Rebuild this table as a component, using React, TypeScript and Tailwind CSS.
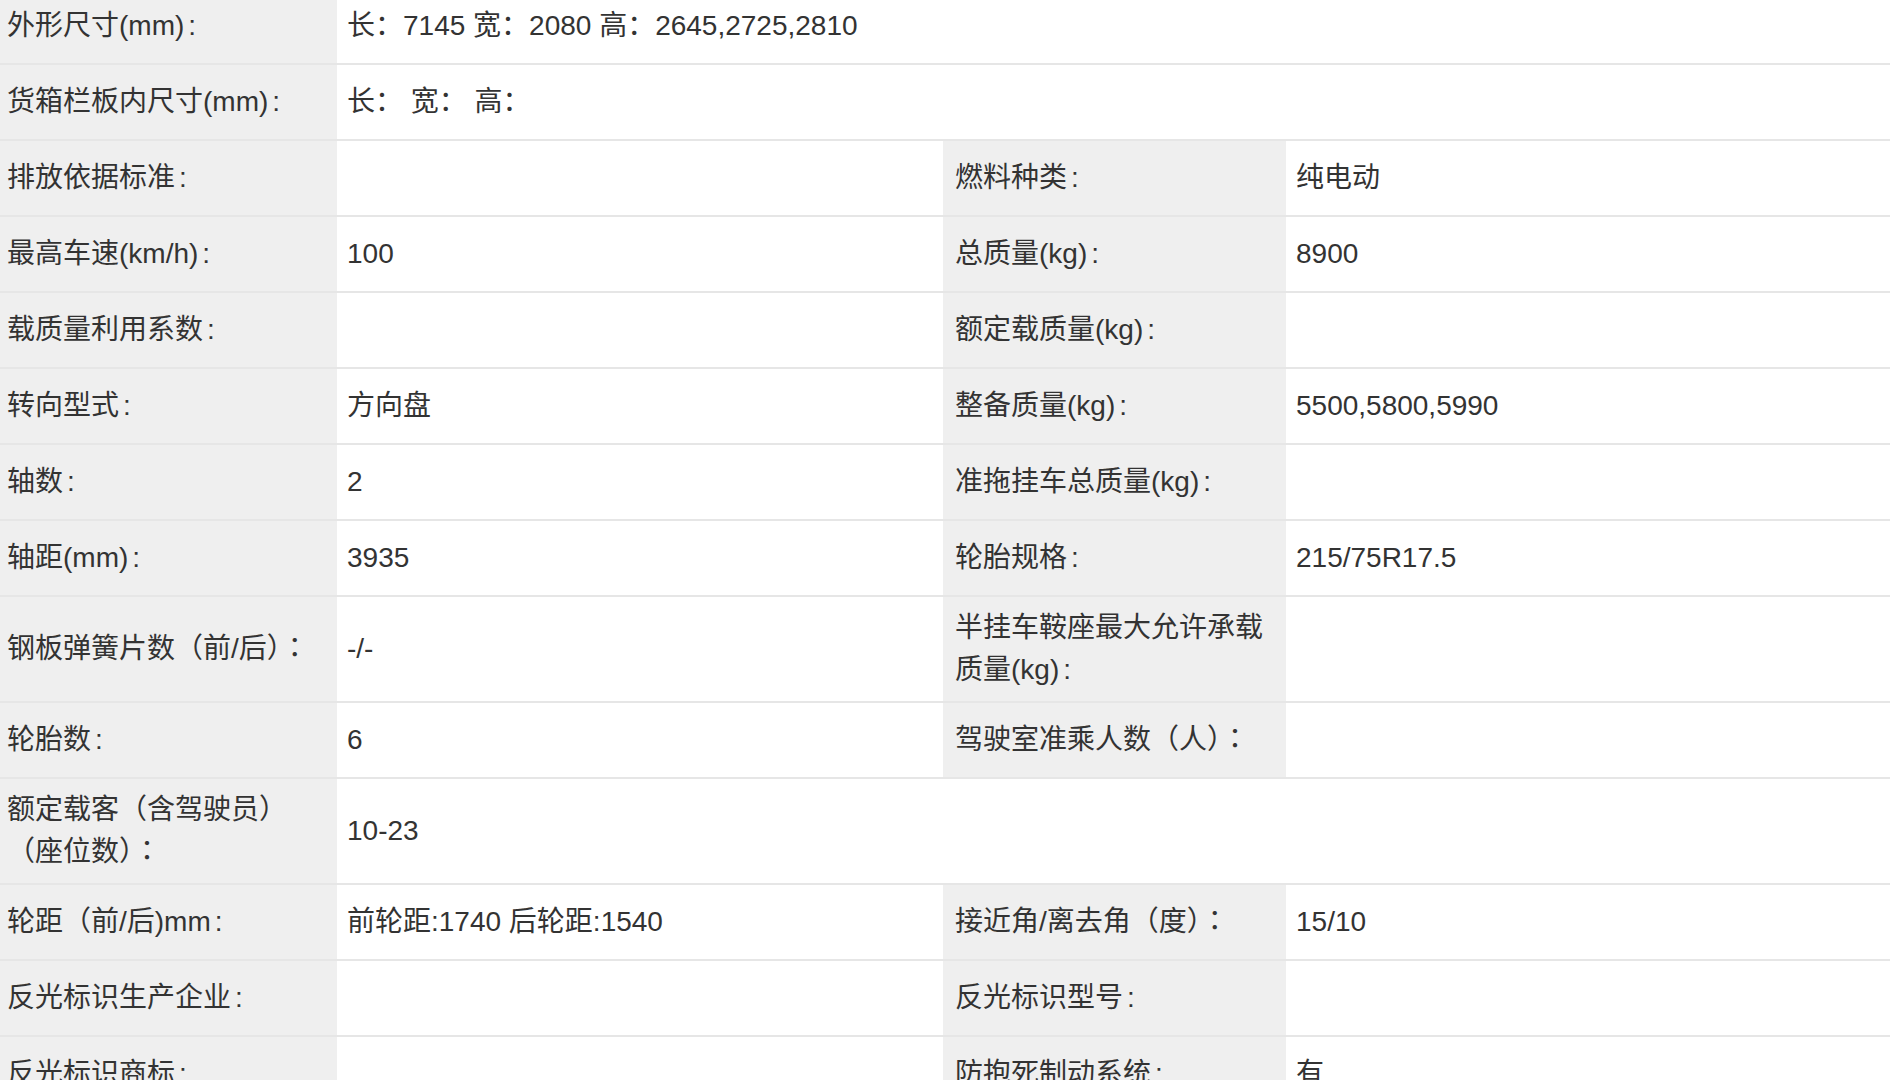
import React from "react";

type Row =
  | { full: true; label: React.ReactNode; value: string }
  | { full?: false; l1: React.ReactNode; v1: string; l2: React.ReactNode; v2: string };

const C = () => <span className="ml-[4px]">:</span>;
const FW = () => (
  <span className="leading-none" style={{ fontFamily: '"Noto Sans CJK TC", sans-serif' }}>
    ：
  </span>
);

const rows: Row[] = [
  { full: true, label: <>外形尺寸(mm)<C /></>, value: "长：7145 宽：2080 高：2645,2725,2810" },
  { full: true, label: <>货箱栏板内尺寸(mm)<C /></>, value: "长： 宽： 高：" },
  { l1: <>排放依据标准<C /></>, v1: "", l2: <>燃料种类<C /></>, v2: "纯电动" },
  { l1: <>最高车速(km/h)<C /></>, v1: "100", l2: <>总质量(kg)<C /></>, v2: "8900" },
  { l1: <>载质量利用系数<C /></>, v1: "", l2: <>额定载质量(kg)<C /></>, v2: "" },
  { l1: <>转向型式<C /></>, v1: "方向盘", l2: <>整备质量(kg)<C /></>, v2: "5500,5800,5990" },
  { l1: <>轴数<C /></>, v1: "2", l2: <>准拖挂车总质量(kg)<C /></>, v2: "" },
  { l1: <>轴距(mm)<C /></>, v1: "3935", l2: <>轮胎规格<C /></>, v2: "215/75R17.5" },
  {
    l1: <>钢板弹簧片数（前/后）<FW /></>,
    v1: "-/-",
    l2: <>半挂车鞍座最大允许承载质量(kg)<C /></>,
    v2: "",
  },
  { l1: <>轮胎数<C /></>, v1: "6", l2: <>驾驶室准乘人数（人）<FW /></>, v2: "" },
  {
    full: true,
    label: (
      <span>
        额定载客（含驾驶员）
        <br />
        （座位数）<FW />
      </span>
    ),
    value: "10-23",
  },
  {
    l1: <>轮距（前/后)mm<C /></>,
    v1: "前轮距:1740 后轮距:1540",
    l2: <>接近角/离去角（度）<FW /></>,
    v2: "15/10",
  },
  { l1: <>反光标识生产企业<C /></>, v1: "", l2: <>反光标识型号<C /></>, v2: "" },
  { l1: <>反光标识商标<C /></>, v1: "", l2: <>防抱死制动系统<C /></>, v2: "有" },
];

const labelCls =
  "bg-[#efefef] min-h-[74px] flex items-center py-[10px] pl-[7px] pr-0 leading-[42px]";
const label2Cls =
  "bg-[#efefef] min-h-[74px] flex items-center py-[10px] pl-[12px] pr-0 leading-[42px]";
const valueCls =
  "bg-white min-h-[74px] flex items-center py-[10px] pl-[10px] pr-2 leading-[42px] whitespace-pre-wrap";

export default function App() {
  return (
    <div
      className="w-[1890px] h-[1080px] overflow-hidden bg-white text-[#333333] text-[28px]"
      style={{ fontFamily: '"Liberation Sans", "Noto Sans CJK SC", sans-serif' }}
    >
      <div className="-mt-[11px]">
        {rows.map((r, i) =>
          r.full ? (
            <div
              key={i}
              className="grid grid-cols-[337px_1fr] border-b-2 border-[#e6e6e6]"
            >
              <div className={labelCls}>
                <div>{r.label}</div>
              </div>
              <div className={valueCls}>{r.value}</div>
            </div>
          ) : (
            <div
              key={i}
              className="grid grid-cols-[337px_606px_343px_1fr] border-b-2 border-[#e6e6e6]"
            >
              <div className={labelCls}>
                <div>{r.l1}</div>
              </div>
              <div className={valueCls}>{r.v1}</div>
              <div className={label2Cls}>
                <div>{r.l2}</div>
              </div>
              <div className={valueCls}>{r.v2}</div>
            </div>
          )
        )}
      </div>
    </div>
  );
}
